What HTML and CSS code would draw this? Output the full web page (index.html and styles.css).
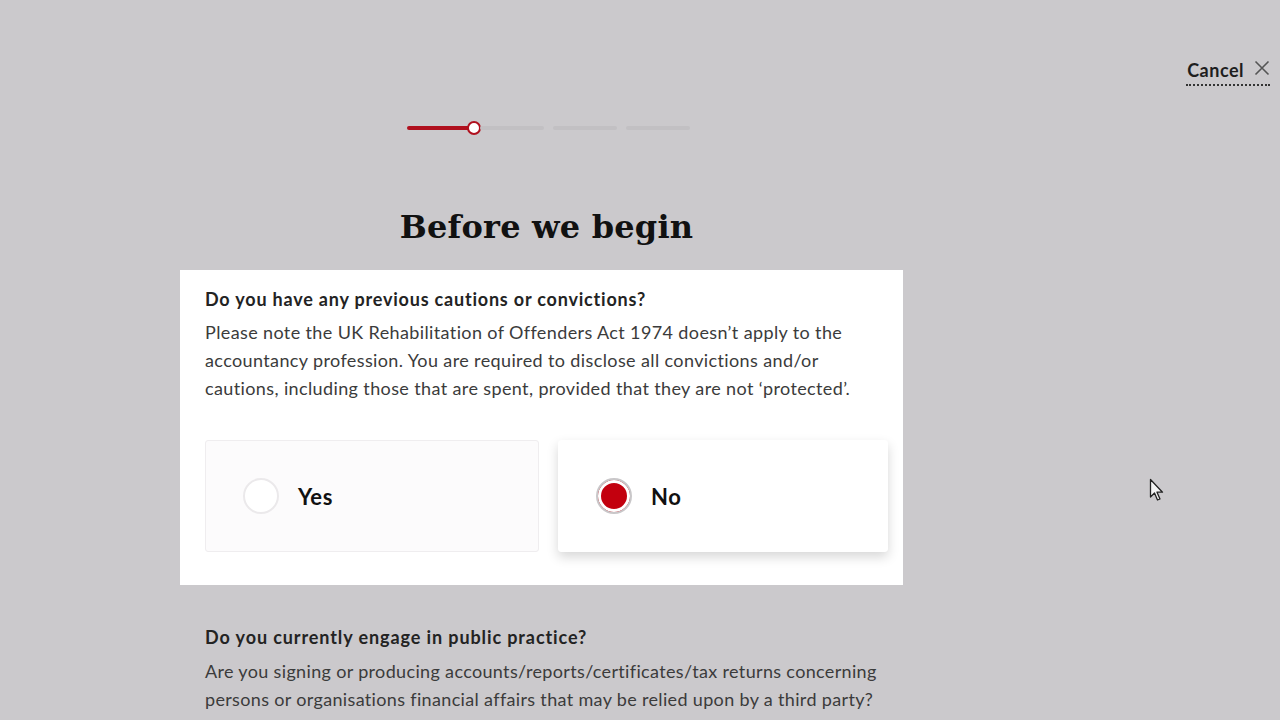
FILE: index.html
```html
<!DOCTYPE html>
<html lang="en">
<head>
<meta charset="utf-8">
<title>Before we begin</title>
<link rel="stylesheet" href="styles.css">
</head>
<body>
<header class="topbar">
  <a class="cancel" href="#">
    <span class="cancel-text">Cancel</span>
    <svg class="cancel-icon" width="16" height="16" viewBox="0 0 16 16"><path d="M1.5 1.5 L14.5 14.5 M14.5 1.5 L1.5 14.5" stroke="#555" stroke-width="1.6" fill="none"/></svg>
  </a>
</header>
<main class="main">
  <div class="progress">
    <div class="seg seg-active"><span class="knob"></span></div>
    <div class="seg"></div>
    <div class="seg"></div>
    <div class="seg"></div>
  </div>
  <h1 class="heading">Before we begin</h1>

  <section class="card">
    <h2 class="q-title">Do you have any previous cautions or convictions?</h2>
    <p class="q-text">Please note the UK Rehabilitation of Offenders Act 1974 doesn’t apply to the accountancy profession. You are required to disclose all convictions and/or cautions, including those that are spent, provided that they are not ‘protected’.</p>
    <div class="options">
      <label class="option">
        <span class="radio"></span>
        <span class="opt-label">Yes</span>
      </label>
      <label class="option option-selected">
        <span class="radio radio-on"></span>
        <span class="opt-label">No</span>
      </label>
    </div>
  </section>

  <section class="plain">
    <h2 class="q-title q-title-alt">Do you currently engage in public practice?</h2>
    <p class="q-text q-text-alt">Are you signing or producing accounts/reports/certificates/tax returns concerning persons or organisations financial affairs that may be relied upon by a third party?</p>
  </section>
</main>
<svg class="cursor" width="18" height="26" viewBox="0 0 18 26"><path d="M1.5 1.5 L1.5 19 L5.5 15 L8.5 22 L11 21 L8 14.2 L13.5 14.2 Z" fill="#f4f4f4" stroke="#222" stroke-width="1.3" stroke-linejoin="round"/></svg>
</body>
</html>
```

FILE: styles.css
```css
html, body {
  margin: 0;
  padding: 0;
}
body {
  background: #cbc9cc;
  font-family: Lato, "Noto Sans", Arial, sans-serif;
  color: #262626;
  width: 1280px;
  height: 720px;
  overflow: hidden;
  position: relative;
}
.topbar {
  height: 90px;
  box-sizing: border-box;
  padding-top: 58px;
  padding-right: 10px;
  display: flex;
  justify-content: flex-end;
  align-items: flex-start;
}
.cancel {
  display: flex;
  align-items: center;
  gap: 10px;
  text-decoration: none;
  color: #1e1e1e;
  border-bottom: 2px dotted #333;
  padding-bottom: 2px;
  padding-left: 1px;
  height: 24px;
}
.cancel-text {
  font-size: 18px;
  font-weight: 700;
  letter-spacing: 0.5px;
}
.cancel-icon {
  display: block;
  margin-top: -4px;
}
.main {
  margin-left: 180px;
  width: 723px;
}
.progress {
  margin: 32px 0 0 227px;
  display: flex;
  gap: 9px;
  height: 12px;
  align-items: center;
}
.seg {
  width: 64px;
  height: 4px;
  background: #c2c0c3;
  border-radius: 2px;
  position: relative;
}
.seg-active {
  background: #b0101e;
}
.knob {
  position: absolute;
  right: -10px;
  top: -5px;
  width: 10px;
  height: 10px;
  border: 2px solid #b0101e;
  background: #fff;
  border-radius: 50%;
}
.heading {
  margin: 70px 0 20px 0;
  padding-left: 10px;
  text-align: center;
  font-family: "DejaVu Serif", "Liberation Serif", serif;
  font-weight: 700;
  font-size: 32px;
  line-height: 46px;
  color: #111;
  letter-spacing: 0.2px;
}
.card {
  background: #fff;
  padding: 15px 15px 33px 25px;
}
.q-title {
  margin: 0;
  font-size: 18px;
  line-height: 28px;
  font-weight: 700;
  color: #232323;
  letter-spacing: 0.8px;
}
.q-text {
  margin: 5px 0 0 0;
  width: 673px;
  font-size: 18px;
  line-height: 28px;
  color: #3b3b3b;
  letter-spacing: 0.38px;
}
.options {
  margin-top: 38px;
  display: grid;
  grid-template-columns: 334px 330px;
  gap: 19px;
}
.option {
  height: 112px;
  box-sizing: border-box;
  display: flex;
  align-items: center;
  padding-left: 37px;
  background: #fcfbfc;
  border: 1px solid #efedef;
  border-radius: 3px;
}
.option-selected {
  background: #fff;
  border-color: #fff;
  padding-left: 37px;
  box-shadow: 0 5px 12px rgba(0, 0, 0, 0.16);
}
.radio {
  width: 36px;
  height: 36px;
  box-sizing: border-box;
  border-radius: 50%;
  border: 2px solid #ebe9eb;
  background: #fff;
  flex: none;
}
.radio-on {
  border: 2px solid #c9c7c9;
  background: #c3000e;
  box-shadow: inset 0 0 0 3px #fff;
}
.opt-label {
  margin-left: 19px;
  font-size: 22px;
  font-weight: 700;
  color: #111;
  letter-spacing: 0.6px;
}
.plain {
  padding: 38px 15px 0 25px;
}
.q-title-alt {
  letter-spacing: 0.9px;
}
.q-text-alt {
  margin-top: 6px;
  width: 690px;
  letter-spacing: 0.34px;
}
.cursor {
  position: absolute;
  left: 1149px;
  top: 478px;
}
```
